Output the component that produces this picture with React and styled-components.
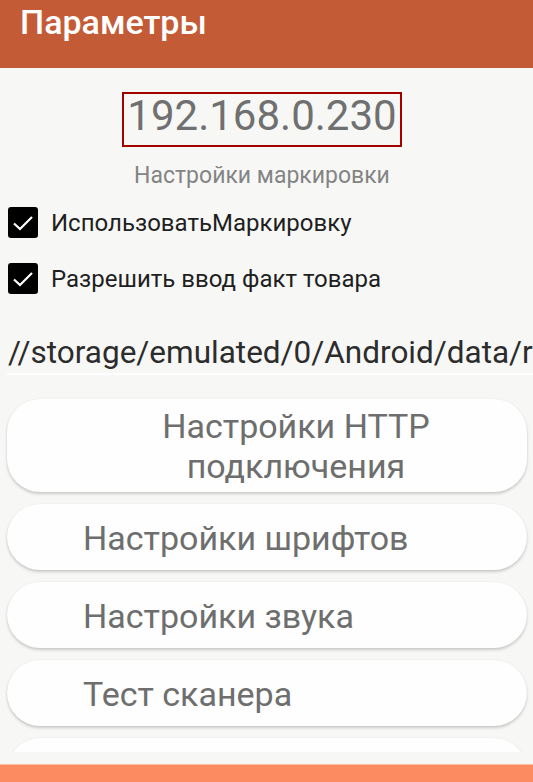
import React from 'react'
import styled, { createGlobalStyle } from 'styled-components'

const GlobalStyle = createGlobalStyle`
  html, body {
    margin: 0;
    padding: 0;
    background: #f7f8f6;
  }
  body {
    font-family: Roboto, "Noto Sans", sans-serif;
  }
`

const buttons = [
  { label: 'Настройки HTTP подключения', center: true, tall: true },
  { label: 'Настройки шрифтов' },
  { label: 'Настройки звука' },
  { label: 'Тест сканера' },
  { label: '' },
]

const checks = ['ИспользоватьМаркировку', 'Разрешить ввод факт товара']

const CheckIcon = () => (
  <svg width="24" height="20" viewBox="0 0 24 20">
    <path d="M3 10.5 L9 16 L21 4" fill="none" stroke="#fff" strokeWidth="2.2" />
  </svg>
)

const App = () => {
  return (
    <React.Fragment>
      <GlobalStyle />
      <Screen>
        <TopBar>
          <Title>Параметры</Title>
        </TopBar>
        <Content>
          <IpBlock>
            <IpBox>192.168.0.230</IpBox>
            <Caption>Настройки маркировки</Caption>
          </IpBlock>
          <CheckList>
            {checks.map((text, i) => (
              <CheckRow key={i}>
                <CheckBox>
                  <CheckIcon />
                </CheckBox>
                <CheckLabel>{text}</CheckLabel>
              </CheckRow>
            ))}
          </CheckList>
          <PathField>//storage/emulated/0/Android/data/ru.example.tsd/files</PathField>
          <ButtonList>
            {buttons.map((b, i) => (
              <MenuButton key={i} center={b.center} tall={b.tall}>
                {b.label}
              </MenuButton>
            ))}
          </ButtonList>
        </Content>
        <BottomBar />
      </Screen>
    </React.Fragment>
  )
}

const Screen = styled.div`
  width: 533px;
  height: 782px;
  display: flex;
  flex-direction: column;
  overflow: hidden;
  background: #f7f8f6;
`

const TopBar = styled.div`
  height: 68px;
  flex-shrink: 0;
  background: #c45b37;
  padding-left: 20px;
  box-sizing: border-box;
`

const Title = styled.div`
  color: #fff;
  font-size: 34px;
  font-weight: 500;
  line-height: 40px;
  margin-top: 2px;
`

const Content = styled.div`
  height: 684px;
  flex-shrink: 0;
  overflow: hidden;
  padding: 0 6px 0 7px;
  box-sizing: border-box;
`

const IpBlock = styled.div`
  display: flex;
  flex-direction: column;
  align-items: center;
  padding-right: 10px;
`

const IpBox = styled.div`
  margin-top: 24px;
  width: 280px;
  height: 55px;
  box-sizing: border-box;
  border: 2px solid #a30000;
  text-align: center;
  color: #707070;
  font-size: 42px;
  line-height: 43px;
`

const Caption = styled.div`
  margin-top: 15px;
  color: #848484;
  font-size: 23px;
  line-height: 27px;
`

const CheckList = styled.div`
  margin-top: 18px;
  display: flex;
  flex-direction: column;
  gap: 25px;
`

const CheckRow = styled.div`
  display: flex;
  align-items: center;
  height: 31px;
`

const CheckBox = styled.div`
  width: 30px;
  height: 31px;
  box-sizing: border-box;
  margin-left: 1px;
  border-radius: 3px;
  background: #000;
  display: flex;
  align-items: center;
  justify-content: center;
`

const CheckLabel = styled.div`
  margin-left: 13px;
  color: #1f1f1f;
  font-size: 24px;
  line-height: 30px;
`

const PathField = styled.div`
  margin-top: 41px;
  margin-right: -6px;
  padding: 0 0 2px 1px;
  white-space: nowrap;
  overflow: hidden;
  color: #2c2c2c;
  font-size: 31.5px;
  line-height: 36px;
  border-bottom: 2px solid #ffffff;
  box-sizing: border-box;
`

const ButtonList = styled.div`
  margin-top: 24px;
  display: flex;
  flex-direction: column;
  gap: 12px;
`

const MenuButton = styled.div`
  flex-shrink: 0;
  height: ${(p) => (p.tall ? '93px' : '66px')};
  box-sizing: border-box;
  border-radius: 33px;
  background: #fdfefd;
  box-shadow: 0 2px 3px rgba(0, 0, 0, 0.18), 0 0 2px rgba(0, 0, 0, 0.06);
  padding: 1px 18px 0 76px;
  display: flex;
  align-items: center;
  justify-content: ${(p) => (p.center ? 'center' : 'flex-start')};
  text-align: ${(p) => (p.center ? 'center' : 'left')};
  color: #6e6e6e;
  font-size: 34px;
  line-height: 40px;
`

const BottomBar = styled.div`
  margin-top: 12px;
  flex: 1;
  background: #fd8b62;
  border-top: 1px solid #f6c1a8;
`

export default App
